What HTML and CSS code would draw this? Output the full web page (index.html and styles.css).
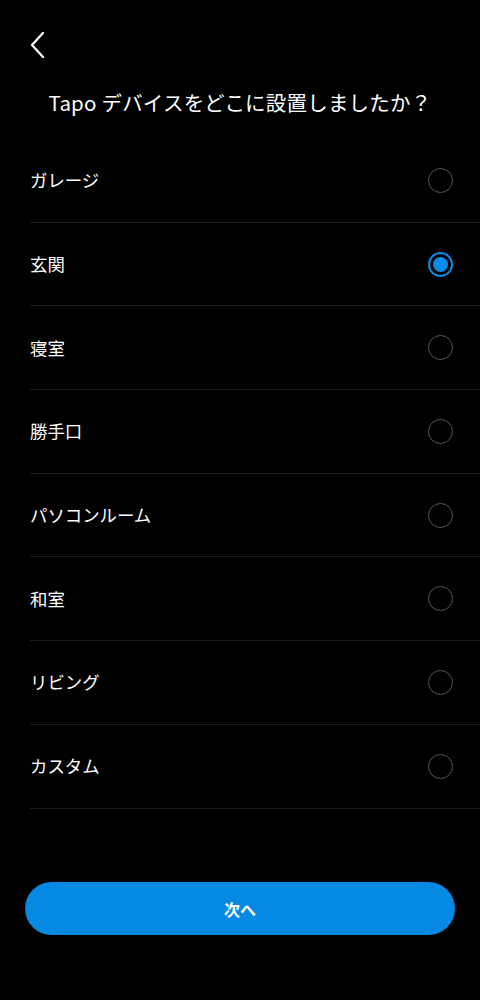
FILE: index.html
```html
<!DOCTYPE html>
<html lang="ja">
<head>
<meta charset="utf-8">
<link rel="stylesheet" href="styles.css">
</head>
<body>
<div class="page">
  <header class="header">
    <button class="back" aria-label="戻る">
      <svg width="16" height="26" viewBox="0 0 16 26"><path d="M13 1 L2 13 L13 25" fill="none" stroke="#fff" stroke-width="2.2" stroke-linecap="round" stroke-linejoin="round"/></svg>
    </button>
    <h1 class="title">Tapo デバイスをどこに設置しましたか？</h1>
  </header>
  <ul class="list">
    <li class="row"><span class="label">ガレージ</span><span class="radio"></span></li>
    <li class="row"><span class="label">玄関</span><span class="radio checked"></span></li>
    <li class="row"><span class="label">寝室</span><span class="radio"></span></li>
    <li class="row"><span class="label">勝手口</span><span class="radio"></span></li>
    <li class="row"><span class="label">パソコンルーム</span><span class="radio"></span></li>
    <li class="row"><span class="label">和室</span><span class="radio"></span></li>
    <li class="row"><span class="label">リビング</span><span class="radio"></span></li>
    <li class="row"><span class="label">カスタム</span><span class="radio"></span></li>
  </ul>
  <div class="footer">
    <button class="next">次へ</button>
  </div>
</div>
</body>
</html>
```
FILE: styles.css
```css
* { box-sizing: border-box; }
html, body {
  margin: 0;
  padding: 0;
  background: #000;
}
body {
  font-family: "Noto Sans CJK JP", "Noto Sans", sans-serif;
  color: #fff;
}
.page {
  width: 480px;
  height: 1000px;
  display: flex;
  flex-direction: column;
}
.header {
  padding: 32px 0 0 0;
  display: flex;
  flex-direction: column;
}
.back {
  margin-left: 30px;
  width: 16px;
  height: 26px;
  padding: 0;
  border: 0;
  background: none;
  display: flex;
}
.title {
  margin: 30px 0 0 0;
  height: 51px;
  font-size: 20.5px;
  line-height: 28px;
  font-weight: 400;
  text-align: center;
  letter-spacing: 0.2px;
}
.list {
  list-style: none;
  margin: 0 0 0 30px;
  padding: 0;
}
.row {
  height: 83.7px;
  border-bottom: 1px solid #1c1c1c;
  display: flex;
  align-items: center;
  justify-content: space-between;
  padding-right: 27px;
}
.label {
  font-size: 17.4px;
  line-height: 24px;
}
.radio {
  width: 25px;
  height: 25px;
  border-radius: 50%;
  border: 1.6px solid #555;
  display: flex;
  align-items: center;
  justify-content: center;
}
.radio.checked {
  border: 2px solid #0a8de8;
}
.radio.checked::after {
  content: "";
  width: 15px;
  height: 15px;
  border-radius: 50%;
  background: #0a8de8;
}
.footer {
  margin-top: auto;
  padding: 0 25px 65px 25px;
}
.next {
  width: 100%;
  height: 53px;
  border: 0;
  border-radius: 27px;
  background: #0589e2;
  color: #fff;
  font-family: "Noto Sans CJK JP", "Noto Sans", sans-serif;
  font-size: 16px;
  font-weight: 700;
}
```
